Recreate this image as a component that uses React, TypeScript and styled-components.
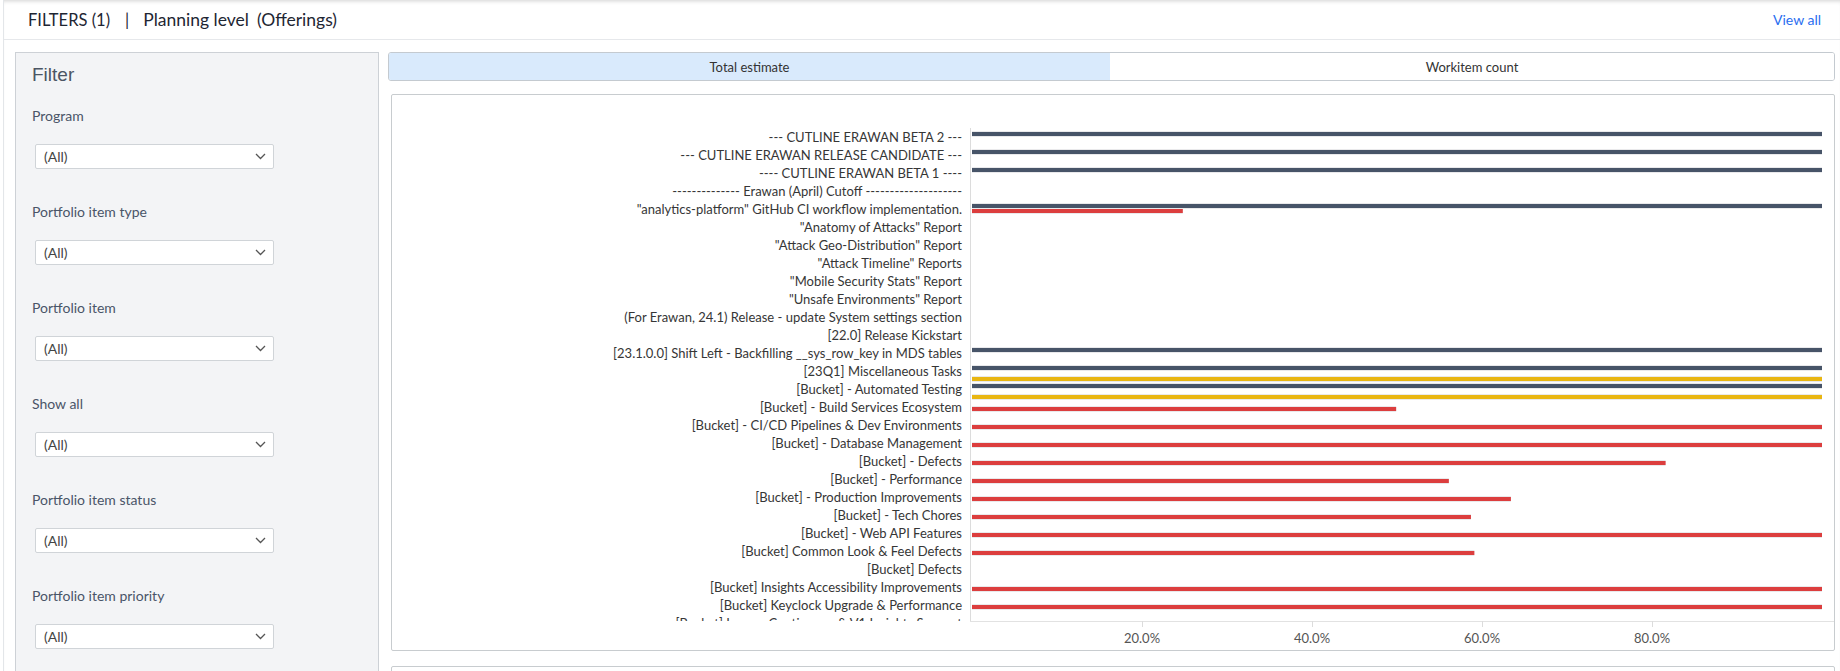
import React from 'react';
import styled, { createGlobalStyle, css } from 'styled-components';

const GlobalStyle = createGlobalStyle`
  html, body {
    margin: 0;
    padding: 0;
    height: 100%;
    overflow: hidden;
    background: #ffffff;
  }
  body {
    font-family: Lato, 'Noto Sans', sans-serif;
    color: #333;
  }
  * { box-sizing: border-box; }
`;

const Page = styled.div`
  height: 100vh;
  overflow: hidden;
  margin-left: 3px;
  border-left: 1px solid #e3e6e9;
  box-shadow: inset 0 4px 4px -3px rgba(0, 0, 0, 0.18);
  display: flex;
  flex-direction: column;
`;

const Header = styled.header`
  height: 40px;
  flex: none;
  display: flex;
  align-items: center;
  justify-content: space-between;
  padding: 0 19px 0 24px;
  border-bottom: 1px solid #e6e8eb;
`;

const HeaderTitle = styled.div`
  font-size: 16.5px;
  color: #1e2633;
  display: flex;
  align-items: center;
  white-space: pre;
`;

const Sep = styled.span`
  margin: 0 14px 0 15px;
`;

const Level = styled.span`
  font-size: 17.5px;
`;

const Scope = styled.span`
  margin-left: 8px;
`;

const ViewAll = styled.a`
  font-size: 14px;
  color: #2a6ef0;
  text-decoration: none;
`;

const Body = styled.div`
  flex: 1;
  display: flex;
  gap: 9px;
  padding: 12px 5px 0 11px;
  min-height: 0;
`;

const FilterPanel = styled.aside`
  width: 364px;
  flex: none;
  min-height: 720px;
  background: #f3f4f6;
  border: 1px solid #cdd1d6;
  padding: 10px 16px 0 16px;
`;

const PanelTitle = styled.h2`
  margin: 0 0 19px;
  font-family: 'Liberation Sans', Arial, sans-serif;
  font-weight: 400;
  font-size: 19px;
  line-height: 24px;
  color: #4b5563;
`;

const FilterGroup = styled.div`
  padding-bottom: 33px;
`;

const FilterLabel = styled.div`
  font-size: 14px;
  line-height: 20px;
  color: #4a5568;
  margin-bottom: 18px;
`;

const Select = styled.div`
  margin-left: 3px;
  width: 239px;
  height: 25px;
  background: #fff;
  border: 1px solid #d0d4d8;
  border-radius: 2px;
  display: flex;
  align-items: center;
  justify-content: space-between;
  padding: 0 7px 0 8px;
  font-size: 14px;
  color: #444;
`;

const Main = styled.main`
  flex: 1;
  min-width: 0;
  display: flex;
  flex-direction: column;
`;

const Tabs = styled.div`
  height: 29px;
  flex: none;
  display: grid;
  grid-template-columns: 721px 1fr;
  border: 1px solid #c4cad0;
  border-radius: 3px;
  overflow: hidden;
`;

const Tab = styled.div<{ $active?: boolean }>`
  display: flex;
  align-items: center;
  justify-content: center;
  font-size: 13px;
  color: #333;
  background: #fff;
  ${(p) =>
    p.$active &&
    css`
      background: #d9eafc;
    `}
`;

const ChartCard = styled.section<{ $height: number }>`
  flex: none;
  margin: 13px 0 0 3px;
  height: ${(p) => p.$height}px;
  border: 1px solid #c8cccf;
  border-radius: 2px;
  background: #fff;
  overflow: hidden;
  & + & {
    margin-top: 15px;
  }
`;

const filters = [
  'Program',
  'Portfolio item type',
  'Portfolio item',
  'Show all',
  'Portfolio item status',
  'Portfolio item priority',
];

type Row = { label: string; dark?: number; red?: number; yellow?: number };

const rows: Row[] = [
  { label: '--- CUTLINE ERAWAN BETA 2 ---', dark: 100 },
  { label: '--- CUTLINE ERAWAN RELEASE CANDIDATE ---', dark: 100 },
  { label: '---- CUTLINE ERAWAN BETA 1 ----', dark: 100 },
  { label: '-------------- Erawan (April) Cutoff --------------------' },
  { label: '"analytics-platform" GitHub CI workflow implementation.', dark: 100, red: 24.8 },
  { label: '"Anatomy of Attacks" Report' },
  { label: '"Attack Geo-Distribution" Report' },
  { label: '"Attack Timeline" Reports' },
  { label: '"Mobile Security Stats" Report' },
  { label: '"Unsafe Environments" Report' },
  { label: '(For Erawan, 24.1) Release - update System settings section' },
  { label: '[22.0] Release Kickstart' },
  { label: '[23.1.0.0] Shift Left - Backfilling __sys_row_key in MDS tables', dark: 100 },
  { label: '[23Q1] Miscellaneous Tasks', dark: 100, yellow: 100 },
  { label: '[Bucket] - Automated Testing', dark: 100, yellow: 100 },
  { label: '[Bucket] - Build Services Ecosystem', red: 49.9 },
  { label: '[Bucket] - CI/CD Pipelines & Dev Environments', red: 100 },
  { label: '[Bucket] - Database Management', red: 100 },
  { label: '[Bucket] - Defects', red: 81.6 },
  { label: '[Bucket] - Performance', red: 56.1 },
  { label: '[Bucket] - Production Improvements', red: 63.4 },
  { label: '[Bucket] - Tech Chores', red: 58.7 },
  { label: '[Bucket] - Web API Features', red: 100 },
  { label: '[Bucket] Common Look & Feel Defects', red: 59.1 },
  { label: '[Bucket] Defects' },
  { label: '[Bucket] Insights Accessibility Improvements', red: 100 },
  { label: '[Bucket] Keyclock Upgrade & Performance', red: 100 },
  { label: '[Bucket] Legacy Continuous & V1 Insights Support', red: 100 },
];

const X0 = 580;
const X100 = 1430;
const TOP = 33;
const ROW = 18;
const PLOT_BOTTOM = 526;
const sx = (v: number) => ((X100 - X0) * v) / 100;

const series = [
  { key: 'dark' as const, color: '#475468', dy: 4 },
  { key: 'red' as const, color: '#dc3e3e', dy: 9 },
  { key: 'yellow' as const, color: '#e9b612', dy: 15 },
];

function Bar({ y, w, color }: { y: number; w: number; color: string }) {
  return (
    <g>
      <rect x={X0} y={y - 1} width={w} height={6} fill="#e9e9eb" />
      <rect x={X0} y={y} width={w} height={4} fill={color} />
    </g>
  );
}

function EstimateChart() {
  return (
    <svg width="100%" height="555" style={{ display: 'block' }}>
      <defs>
        <clipPath id="plot">
          <rect x="0" y="0" width="1442" height={PLOT_BOTTOM} />
        </clipPath>
      </defs>
      <g clipPath="url(#plot)" fontFamily="Lato, sans-serif" fontSize="13" fill="#363636">
        {rows.map((r, i) => {
          const y0 = TOP + i * ROW;
          return (
            <g key={r.label}>
              <text x={570} y={y0 + 13.5} textAnchor="end">
                {r.label}
              </text>
              {series.map((s) => {
                const v = r[s.key];
                return v ? <Bar key={s.key} y={y0 + s.dy} w={sx(v)} color={s.color} /> : null;
              })}
            </g>
          );
        })}
      </g>
      <line x1={578.5} x2={578.5} y1={TOP} y2={PLOT_BOTTOM} stroke="#dcdcdc" />
      <line x1={578} x2={1442} y1={PLOT_BOTTOM + 0.5} y2={PLOT_BOTTOM + 0.5} stroke="#e2e2e2" />
      {[20, 40, 60, 80].map((t) => {
        const x = X0 + sx(t);
        return (
          <g key={t}>
            <line x1={x + 0.5} x2={x + 0.5} y1={PLOT_BOTTOM} y2={PLOT_BOTTOM + 6} stroke="#dcdcdc" />
            <text x={x} y={PLOT_BOTTOM + 22} textAnchor="middle" fontFamily="Lato, sans-serif" fontSize="13" fill="#555">
              {t.toFixed(1)}%
            </text>
          </g>
        );
      })}
    </svg>
  );
}

function Chevron() {
  return (
    <svg width="11" height="7" viewBox="0 0 11 7">
      <polyline points="1,1 5.5,5.5 10,1" fill="none" stroke="#555" strokeWidth="1.3" />
    </svg>
  );
}

export default function App() {
  return (
    <>
      <GlobalStyle />
      <Page>
        <Header>
          <HeaderTitle>
            FILTERS (1)<Sep>|</Sep>
            <Level>
              Planning level<Scope>(Offerings)</Scope>
            </Level>
          </HeaderTitle>
          <ViewAll href="#">View all</ViewAll>
        </Header>
        <Body>
          <FilterPanel>
            <PanelTitle>Filter</PanelTitle>
            {filters.map((f) => (
              <FilterGroup key={f}>
                <FilterLabel>{f}</FilterLabel>
                <Select>
                  (All)
                  <Chevron />
                </Select>
              </FilterGroup>
            ))}
          </FilterPanel>
          <Main>
            <Tabs>
              <Tab $active>Total estimate</Tab>
              <Tab>Workitem count</Tab>
            </Tabs>
            <ChartCard $height={557}>
              <EstimateChart />
            </ChartCard>
            <ChartCard $height={300} />
          </Main>
        </Body>
      </Page>
    </>
  );
}
